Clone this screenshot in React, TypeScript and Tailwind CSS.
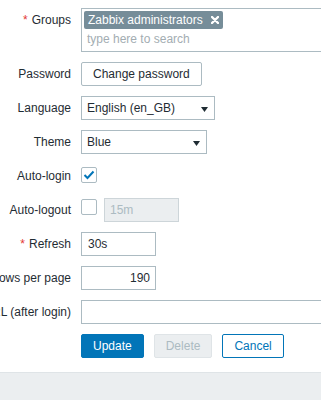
import React from "react";

const font = { fontFamily: '"Liberation Sans", Arial, sans-serif' };

function Row({
  label,
  required,
  children,
}: {
  label?: string;
  required?: boolean;
  children: React.ReactNode;
}) {
  return (
    <div className="flex items-start">
      <div className="w-[181px] shrink-0 pr-[10px] h-[24px] flex items-center justify-end whitespace-nowrap text-[#1f2c33]">
        {required && <span className="text-[#e33734] mr-[4px]">*</span>}
        {label}
      </div>
      <div className="flex-1 min-w-0">{children}</div>
    </div>
  );
}

function Arrow() {
  return (
    <svg width="7" height="5" viewBox="0 0 7 5" className="absolute right-[6px] top-[10px]">
      <path d="M0 0 H7 L3.5 5 Z" fill="#1f2c33" />
    </svg>
  );
}

function Select({ value, width }: { value: string; width: string }) {
  return (
    <div
      className={`relative h-[24px] border border-[#acbbc2] bg-white flex items-center pl-[5px] text-[#1f2c33] ${width}`}
    >
      {value}
      <Arrow />
    </div>
  );
}

function Check({ checked }: { checked?: boolean }) {
  return (
    <div className="w-[16px] h-[16px] border border-[#acbbc2] rounded-[2px] bg-white flex items-center justify-center shrink-0">
      {checked && (
        <svg width="12" height="10" viewBox="0 0 12 10">
          <path d="M1.5 5 L4.5 8 L10.5 1.5" stroke="#0275b8" strokeWidth="2" fill="none" />
        </svg>
      )}
    </div>
  );
}

export default function App() {
  return (
    <div
      className="w-[321px] h-[400px] overflow-hidden bg-white flex flex-col text-[12px] leading-[14px]"
      style={font}
    >
      <div className="-ml-[100px] pt-[8px] pb-[14px] flex flex-col gap-[10px]">
        <Row label="Groups" required>
          <div className="w-[453px] h-[44px] border border-[#acbbc2] bg-white p-[2px] pt-[2px] flex flex-col">
            <div className="flex">
              <div className="h-[18px] bg-[#768d99] text-white rounded-[2px] flex items-center pl-[4px] pr-[4px]">
                <span>Zabbix administrators</span>
                <svg width="8" height="8" viewBox="0 0 8 8" className="ml-[8px]">
                  <path d="M1 1 L7 7 M7 1 L1 7" stroke="white" strokeWidth="2.4" strokeLinecap="round" />
                </svg>
              </div>
            </div>
            <div className="h-[20px] flex items-center pl-[3px] text-[#a3adb2]">type here to search</div>
          </div>
        </Row>
        <Row label="Password">
          <button className="h-[24px] px-[11px] border border-[#acbbc2] rounded-[2px] bg-white text-[#1f2c33] leading-[14px]">
            Change password
          </button>
        </Row>
        <Row label="Language">
          <Select value="English (en_GB)" width="w-[134px]" />
        </Row>
        <Row label="Theme">
          <Select value="Blue" width="w-[126px]" />
        </Row>
        <Row label="Auto-login">
          <div className="h-[24px] pt-[3px]">
            <Check checked />
          </div>
        </Row>
        <Row label="Auto-logout">
          <div className="flex items-start gap-[7px]">
            <div className="pt-[1px]">
              <Check />
            </div>
            <div className="w-[75px] h-[24px] border border-[#cdd5d9] bg-[#ebeef0] flex items-center pl-[5px] text-[#acbbc2]">
              15m
            </div>
          </div>
        </Row>
        <Row label="Refresh" required>
          <div className="w-[75px] h-[24px] border border-[#acbbc2] bg-white flex items-center pl-[6px] text-[#1f2c33]">
            30s
          </div>
        </Row>
        <Row label="Rows per page">
          <div className="w-[75px] h-[24px] border border-[#acbbc2] bg-white flex items-center justify-end pr-[5px] text-[#1f2c33]">
            190
          </div>
        </Row>
        <Row label="URL (after login)">
          <div className="w-[453px] h-[24px] border border-[#acbbc2] bg-white" />
        </Row>
        <Row>
          <div className="flex gap-[10px]">
            <button className="h-[24px] px-[11px] border border-[#0275b8] rounded-[2px] bg-[#0275b8] text-white leading-[14px]">
              Update
            </button>
            <button className="h-[24px] px-[11px] border border-[#dfe4e7] rounded-[2px] bg-[#ebeef0] text-[#acbbc2] leading-[14px]">
              Delete
            </button>
            <button className="h-[24px] px-[11px] border border-[#0275b8] rounded-[2px] bg-white text-[#0275b8] leading-[14px]">
              Cancel
            </button>
          </div>
        </Row>
      </div>
      <div className="flex-1 border-t border-[#dfe4e7] bg-[#ebeef0]" />
    </div>
  );
}
